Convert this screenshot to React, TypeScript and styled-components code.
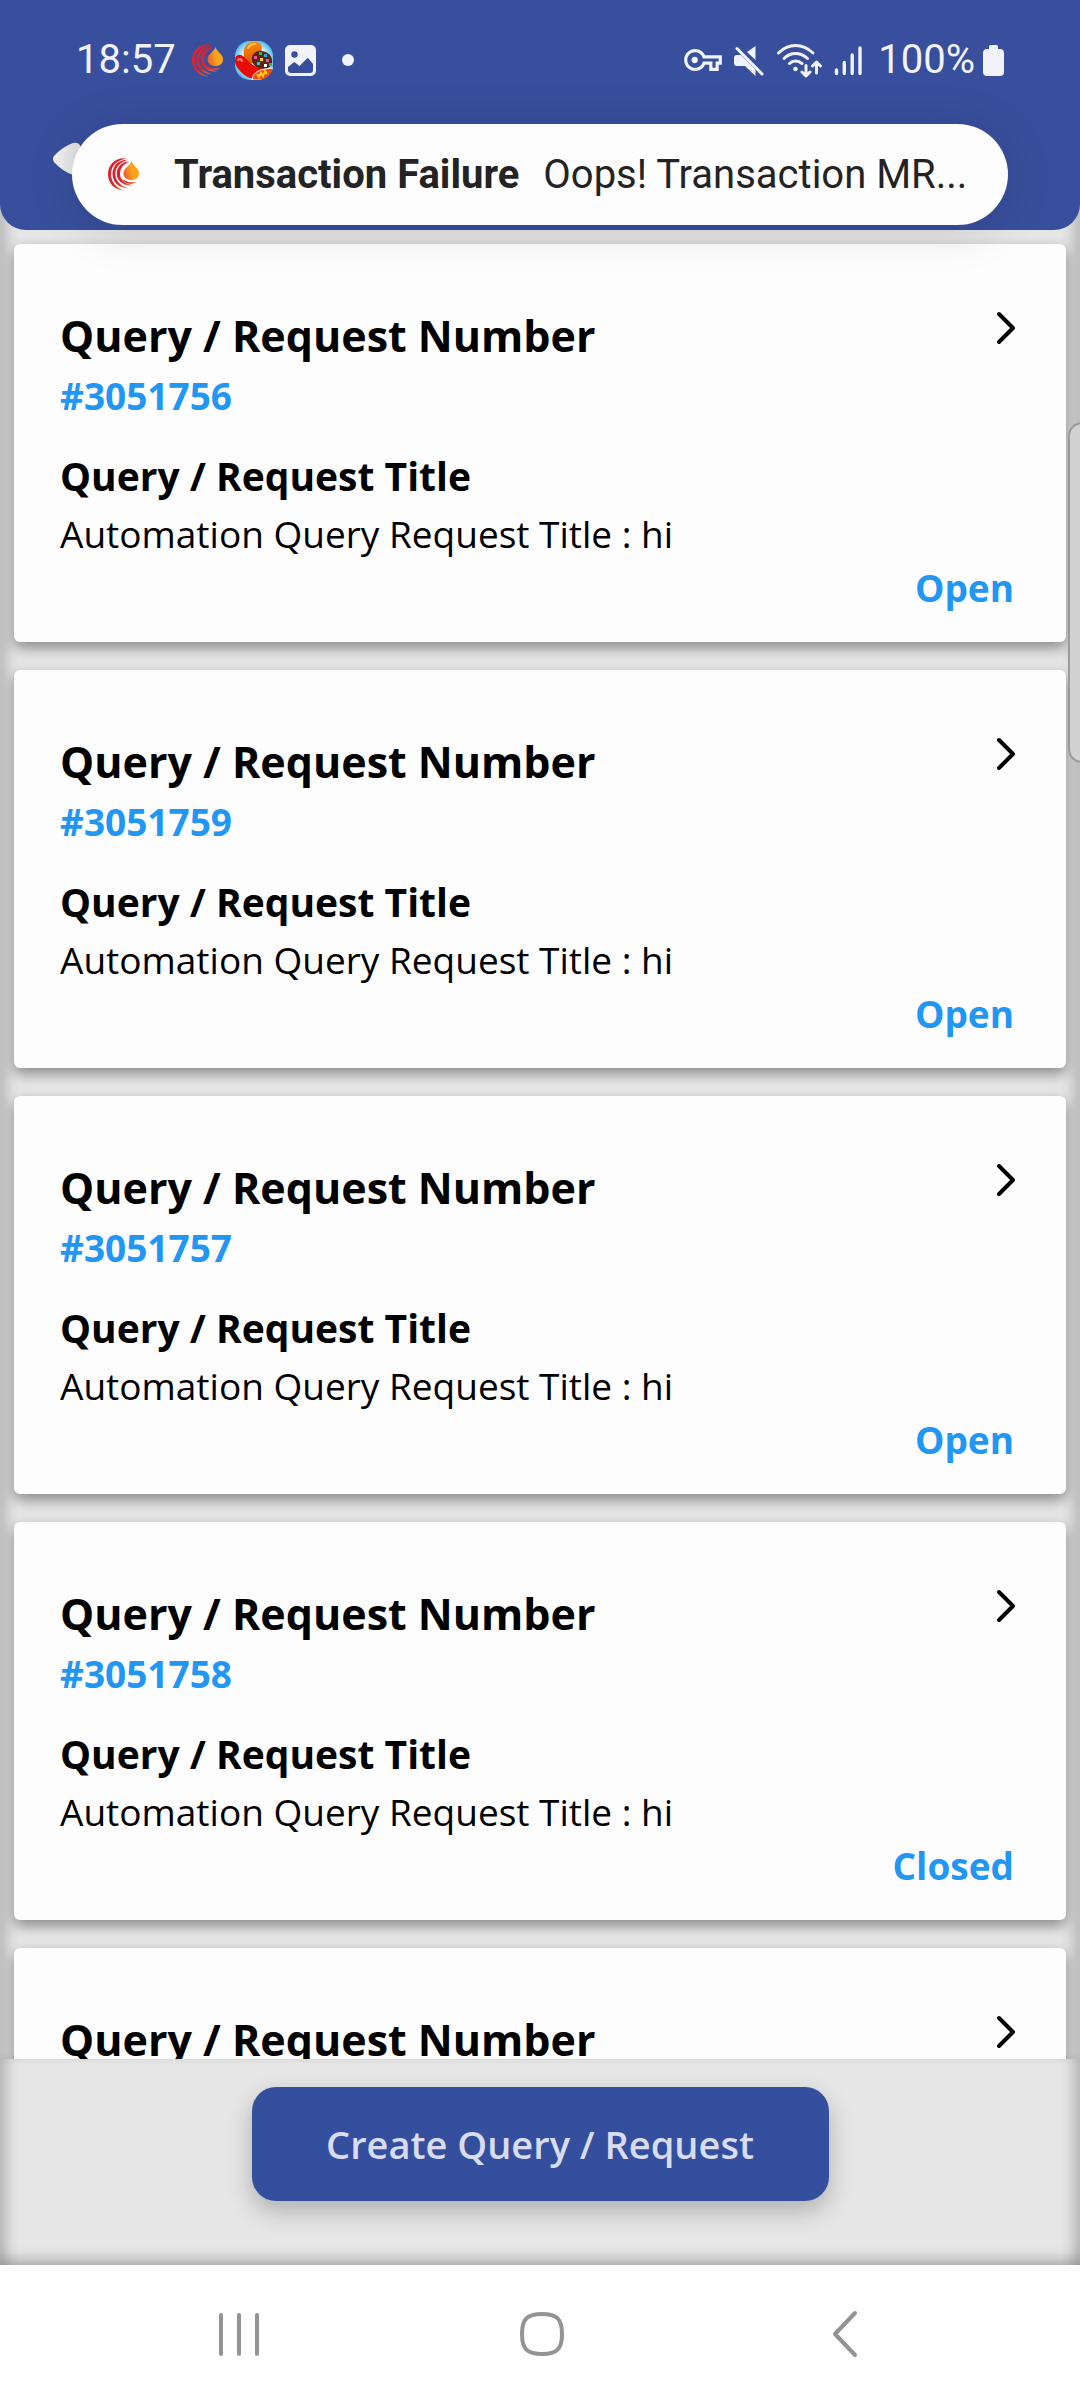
import React from 'react';
import styled, { createGlobalStyle } from 'styled-components';

const GlobalStyle = createGlobalStyle`
  *, *::before, *::after { box-sizing: border-box; }
  body { margin: 0; background: #fefefe; }
  button { border: 0; padding: 0; background: none; font: inherit; color: inherit; cursor: pointer; }
  svg { display: block; flex: none; }
`;

const appFont = `"Open Sans", "Noto Sans", sans-serif`;
const systemFont = `Roboto, "Liberation Sans", sans-serif`;
const sideShade = 'inset 14px 0 12px -6px rgba(0, 0, 0, 0.18), inset -14px 0 12px -6px rgba(0, 0, 0, 0.18)';

const Screen = styled.div`
  position: relative;
  display: flex;
  flex-direction: column;
  height: 100vh;
  overflow: hidden;
  background: #e6e6e6;
  font-family: ${appFont};
  color: #000;
`;

const Header = styled.header`
  position: relative;
  z-index: 2;
  flex: none;
  background: #384f9d;
  border-radius: 0 0 26px 26px;
`;

const StatusBar = styled.div`
  display: flex;
  justify-content: space-between;
  align-items: center;
  padding: 32px 76px 0;
  color: #f1f2fa;
  font-family: ${systemFont};
  font-size: 40px;
  line-height: 56px;
`;

const StatusGroup = styled.div`
  display: flex;
  align-items: center;
  gap: 12px;
`;

const Clock = styled.time`
  padding-right: 4px;
`;

const Battery = styled.span`
  display: flex;
  align-items: center;
  gap: 8px;
  margin-left: 4px;
`;

const MoreDot = styled.span`
  width: 12px;
  height: 12px;
  margin-left: 14px;
  border-radius: 50%;
  background: #f1f2fa;
`;

const AppBar = styled.div`
  display: flex;
  align-items: center;
  height: 142px;
  padding-left: 52px;
`;

const Notification = styled.button`
  position: absolute;
  z-index: 3;
  top: 124px;
  left: 72px;
  right: 72px;
  display: flex;
  align-items: center;
  height: 101px;
  padding: 0 36px;
  border-radius: 51px;
  background: #fdfdfe;
  box-shadow: 0 4px 48px rgba(0, 0, 0, 0.14);
  color: #232324;
  font-family: ${systemFont};
  font-size: 40px;
  line-height: 56px;
  text-align: left;
`;

const NotificationTitle = styled.strong`
  margin-left: 35px;
  font-weight: 700;
  white-space: nowrap;
`;

const NotificationText = styled.span`
  margin-left: 24px;
  white-space: nowrap;
`;

const List = styled.ul`
  flex: 1 1 0;
  min-height: 0;
  overflow: hidden;
  display: flex;
  flex-direction: column;
  gap: 28px;
  margin: -26px 0 0;
  padding: 40px 14px 0;
  list-style: none;
  box-shadow: ${sideShade};
`;

const Card = styled.li`
  flex: none;
  display: flex;
  flex-direction: column;
  padding: 62px 52px 30px 46px;
  border-radius: 6px;
  background: #fdfdfd;
  box-shadow: 0 6px 14px rgba(0, 0, 0, 0.4);
`;

const CardTop = styled.div`
  display: flex;
  justify-content: space-between;
  align-items: flex-start;
`;

const CardHeading = styled.h2`
  margin: 0;
  font-size: 43px;
  line-height: 60px;
  font-weight: 700;
`;

const CardSubheading = styled.h3`
  margin: 30px 0 0;
  font-size: 39px;
  line-height: 52px;
  font-weight: 700;
`;

const CardText = styled.p`
  margin: 8px 0 0;
  font-size: 37px;
  line-height: 48px;
`;

const Highlight = styled.p<{ $end?: boolean }>`
  margin: 6px 0 0;
  align-self: ${(p) => (p.$end ? 'flex-end' : 'flex-start')};
  color: #2196f3;
  font-size: 37px;
  line-height: 48px;
  font-weight: 700;
`;

const OpenButton = styled.button`
  display: flex;
  margin: 4px -2px 0 0;
`;

const Footer = styled.footer`
  flex: none;
  display: flex;
  justify-content: center;
  padding: 28px 14px 64px;
  box-shadow: ${sideShade}, inset 0 -14px 12px -6px rgba(0, 0, 0, 0.18);
`;

const CreateButton = styled.button`
  width: 577px;
  max-width: 100%;
  height: 114px;
  border-radius: 24px;
  background: #354f9f;
  box-shadow: 0 10px 24px rgba(0, 0, 0, 0.24);
  color: #d8dcee;
  font-size: 38px;
  line-height: 52px;
  font-weight: 600;
`;

const NavBar = styled.nav`
  flex: none;
  display: flex;
  justify-content: center;
  align-items: center;
  gap: 207px;
  height: 135px;
  padding: 2px 0 0 4px;
  background: #fefefe;
`;

const NavButton = styled.button`
  display: flex;
  justify-content: center;
  align-items: center;
  width: 96px;
  height: 96px;
`;

const EdgeHandle = styled.div`
  position: absolute;
  z-index: 1;
  top: 422px;
  right: -4px;
  width: 16px;
  height: 341px;
  border: 2px solid #9b9b9b;
  border-radius: 14px 0 0 14px;
  background: #d2d2d2;
`;

const FlameLogo = ({ id }: { id: string }) => (
  <svg width="31" height="33" viewBox="0 0 31 33" fill="none" aria-hidden="true">
    <defs>
      <linearGradient id={`${id}-ring`} x1="0" y1="0" x2="1" y2="1">
        <stop offset="0" stopColor="#ec1c2b" />
        <stop offset="0.55" stopColor="#cc2a35" />
        <stop offset="1" stopColor="#f0872c" />
      </linearGradient>
      <linearGradient id={`${id}-drop`} x1="0" y1="0.7" x2="1" y2="0.4">
        <stop offset="0" stopColor="#ea5a24" />
        <stop offset="0.55" stopColor="#fba31c" />
        <stop offset="1" stopColor="#f8a51d" />
      </linearGradient>
    </defs>
    <g fill={`url(#${id}-ring)`}>
      <path d="M18 .4C7-.6 0 7 0 16s6 16 16.500 16.600C8 30 3 24 3 16S8.500 2.500 18 .4z" />
      <path d="M20 1.800C10 1.500 4.500 8.500 4.500 16S10 30 20.500 30.500C12.500 28 7.300 22.500 7.300 16S12 4 20 1.800z" />
      <path d="M21 3.500C13 3.500 8.800 9.500 8.800 16S15 28.500 25.500 27.500C17 26 12 21.500 12 16S15 6.500 21 3.500z" />
      <path d="M14 20.500c2.500 5.500 9.500 7 14.500 3.500C23 25 18 24 14 20.500z" />
    </g>
    <path d="M23.500 3c1 4.500 7.500 7 7.500 12.500 0 4-3.200 6.500-7.500 6.500-4.500 0-8-2.500-8-6.500C15.500 10 22.500 7.500 23.500 3z" fill={`url(#${id}-drop)`} />
  </svg>
);

const CandyIcon = () => (
  <svg width="38" height="39" viewBox="0 0 38 39" aria-hidden="true">
    <defs>
      <clipPath id="candy-clip"><rect width="38" height="39" rx="15" /></clipPath>
      <radialGradient id="candy-sky" cx="0.5" cy="0.5" r="0.6">
        <stop offset="0.5" stopColor="#fff" />
        <stop offset="1" stopColor="#1fa6ec" />
      </radialGradient>
      <linearGradient id="candy-orange" x1="0" y1="0" x2="0" y2="1">
        <stop offset="0" stopColor="#f68a0c" />
        <stop offset="1" stopColor="#e25500" />
      </linearGradient>
    </defs>
    <g clipPath="url(#candy-clip)">
      <rect width="38" height="39" fill="url(#candy-sky)" />
      <path d="M9 16C7 4 14 0 21 1c7 1 7 7 4 11-3 5-2 8-7 10S10 22 9 16z" fill="url(#candy-orange)" />
      <path d="M13 7c2-3 4-4 7-4" stroke="#ffc45a" strokeWidth="2" strokeLinecap="round" fill="none" />
      <path d="M17 19c-1-6 5-10 10-9 7 1 11 6 10 12-1 5-8 8-14 5-4-2-6-5-6-8z" fill="#5a2412" />
      <path d="M0 19c0-5 5-7 9-3 5 5 9 9 16 11 5 1 4 7 0 9-5 3-12 2-18-4C2 27 0 24 0 19z" fill="#e80b05" />
      <path d="M3 19c2-2 3-1 4 1" stroke="#ff8a80" strokeWidth="2" strokeLinecap="round" fill="none" />
      <path d="M17 39c1-8 7-11 21-12v12z" fill="#f04a08" stroke="#fff" strokeWidth="1" />
      <path d="M22 33l2 3 2-4 2 3 2-5 2 3" stroke="#ffd21f" strokeWidth="2" fill="none" />
      <rect x="19" y="15" width="3" height="3" fill="#ef4fae" />
      <rect x="24" y="11" width="3" height="3" fill="#3bb54a" />
      <rect x="29" y="13" width="3" height="3" fill="#29a8e8" />
      <rect x="25" y="17" width="3" height="3" fill="#f8d91c" />
      <rect x="31" y="18" width="3" height="3" fill="#ef4fae" />
      <rect x="22" y="21" width="3" height="3" fill="#3fc1e8" />
      <rect x="29" y="23" width="3" height="3" fill="#fff" />
      <rect x="34" y="22" width="3" height="3" fill="#3bb54a" />
    </g>
  </svg>
);

const PictureIcon = () => (
  <svg width="31" height="31" viewBox="0 0 31 31" aria-hidden="true">
    <path
      fillRule="evenodd"
      fill="currentColor"
      d="M5 0h21a5 5 0 0 1 5 5v21a5 5 0 0 1-5 5H5a5 5 0 0 1-5-5V5a5 5 0 0 1 5-5zM9.500 6.300a3.200 3.200 0 1 0 0 6.400 3.200 3.200 0 0 0 0-6.400zM3 22v3a3 3 0 0 0 3 3h19a3 3 0 0 0 3-3v-6l-4.500-5.500a1 1 0 0 0-1.500 0L14.500 21 10 17.500a1 1 0 0 0-1.300 0z"
    />
  </svg>
);

const KeyIcon = () => (
  <svg width="38" height="22" viewBox="0 5 24 14" fill="currentColor" aria-hidden="true">
    <path d="M22 19h-6v-4h-2.680c-1.140 2.420-3.600 4-6.320 4-3.860 0-7-3.140-7-7s3.140-7 7-7c2.720 0 5.170 1.580 6.320 4H24v6h-2v4zm-4-2h2v-4h2v-2H11.940l-.23-.67C11.010 8.340 9.110 7 7 7c-2.760 0-5 2.240-5 5s2.240 5 5 5c2.110 0 4.010-1.340 4.710-3.330l.23-.67H18v4z" />
    <circle cx="6.700" cy="12" r="2" />
  </svg>
);

const MuteIcon = () => (
  <svg width="30" height="31" viewBox="0 0 30 31" fill="currentColor" aria-hidden="true">
    <path d="M21.500 1v14L13 7z" />
    <path d="M3 10h4l14.500 14.500V31L11 21H3a3 3 0 0 1-3-3v-5a3 3 0 0 1 3-3z" />
    <path d="M3 3.500L28 29" stroke="currentColor" strokeWidth="3" strokeLinecap="round" />
  </svg>
);

const WifiIcon = () => (
  <svg width="46" height="36" viewBox="0 0 46 36" fill="none" stroke="currentColor" strokeWidth="3" strokeLinecap="round" strokeLinejoin="round" aria-hidden="true">
    <path d="M2.500 11Q10 3.500 19.500 3.500T37 11" />
    <path d="M8 16.500Q13 11.500 19.500 11.500T31.500 16.500" />
    <path d="M13.500 21.500Q16 19 19.500 19T26 21.500" />
    <circle cx="19.500" cy="27" r="2.300" fill="currentColor" stroke="none" />
    <path d="M30 23.500v10M26 30l4 3.800 4-3.800M40.500 31V20.500M36.500 24l4-3.800 4 3.800" />
  </svg>
);

const SignalIcon = () => (
  <svg width="28" height="31" viewBox="0 0 28 31" stroke="currentColor" strokeWidth="3.400" strokeLinecap="round" aria-hidden="true">
    <path d="M2.500 25v3.500M10.300 17.500v11M18.200 10v18.500M26 3v25.500" />
  </svg>
);

const BatteryIcon = () => (
  <svg width="21" height="31" viewBox="0 0 21 31" fill="currentColor" aria-hidden="true">
    <path d="M7.500 0h6a1.500 1.500 0 0 1 1.500 1.500V4h2a4 4 0 0 1 4 4v19a4 4 0 0 1-4 4H4a4 4 0 0 1-4-4V8a4 4 0 0 1 4-4h2V1.500A1.500 1.500 0 0 1 7.500 0z" />
  </svg>
);

const BackArrow = () => (
  <svg width="40" height="34" viewBox="0 0 40 34" aria-hidden="true">
    <defs>
      <linearGradient id="back-shade" x1="0" y1="0" x2="0.8" y2="0">
        <stop offset="0" stopColor="#f6f6f7" />
        <stop offset="1" stopColor="#e2e2e4" />
      </linearGradient>
    </defs>
    <path d="M2 14Q10 5 21 1q8-2 8 8v16q0 10-8 8Q10 29 2 20q-2-3 0-6z" fill="url(#back-shade)" />
  </svg>
);

const Chevron = () => (
  <svg width="22" height="36" viewBox="0 0 22 36" fill="none" stroke="#000" strokeWidth="4" strokeLinecap="round" strokeLinejoin="round" aria-hidden="true">
    <path d="M5 4l14 14L5 32" />
  </svg>
);

const queries = [
  { number: '#3051756', title: 'Automation Query Request Title : hi', status: 'Open' },
  { number: '#3051759', title: 'Automation Query Request Title : hi', status: 'Open' },
  { number: '#3051757', title: 'Automation Query Request Title : hi', status: 'Open' },
  { number: '#3051758', title: 'Automation Query Request Title : hi', status: 'Closed' },
  { number: '', title: '', status: '' },
];

export default function App() {
  return (
    <>
      <GlobalStyle />
      <Screen>
        <Header>
          <StatusBar>
            <StatusGroup>
              <Clock>18:57</Clock>
              <FlameLogo id="status-flame" />
              <CandyIcon />
              <PictureIcon />
              <MoreDot />
            </StatusGroup>
            <StatusGroup>
              <KeyIcon />
              <MuteIcon />
              <WifiIcon />
              <SignalIcon />
              <Battery>
                100%
                <BatteryIcon />
              </Battery>
            </StatusGroup>
          </StatusBar>
          <AppBar>
            <button aria-label="Back"><BackArrow /></button>
          </AppBar>
          <Notification>
            <FlameLogo id="notice-flame" />
            <NotificationTitle>Transaction Failure</NotificationTitle>
            <NotificationText>Oops! Transaction MR...</NotificationText>
          </Notification>
        </Header>

        <List>
          {queries.map((q, i) => (
            <Card key={i}>
              <CardTop>
                <CardHeading>Query / Request Number</CardHeading>
                <OpenButton aria-label="View details"><Chevron /></OpenButton>
              </CardTop>
              {q.number && (
                <>
                  <Highlight>{q.number}</Highlight>
                  <CardSubheading>Query / Request Title</CardSubheading>
                  <CardText>{q.title}</CardText>
                  <Highlight $end>{q.status}</Highlight>
                </>
              )}
            </Card>
          ))}
        </List>

        <Footer>
          <CreateButton>Create Query / Request</CreateButton>
        </Footer>

        <NavBar aria-label="System">
          <NavButton aria-label="Recent apps">
            <svg width="44" height="46" viewBox="0 0 44 46" stroke="#939393" strokeWidth="4" strokeLinecap="round" aria-hidden="true">
              <path d="M4 4v39M22 4v39M40 4v39" />
            </svg>
          </NavButton>
          <NavButton aria-label="Home">
            <svg width="46" height="46" viewBox="0 0 46 46" fill="none" stroke="#939393" strokeWidth="4" aria-hidden="true">
              <path d="M23 3C8 3 3 8 3 23s5 20 20 20 20-5 20-20S38 3 23 3z" />
            </svg>
          </NavButton>
          <NavButton aria-label="Go back">
            <svg width="28" height="48" viewBox="0 0 28 48" fill="none" stroke="#939393" strokeWidth="4" strokeLinecap="round" strokeLinejoin="round" aria-hidden="true">
              <path d="M24 3L4 24l20 21" />
            </svg>
          </NavButton>
        </NavBar>
        <EdgeHandle />
      </Screen>
    </>
  );
}
